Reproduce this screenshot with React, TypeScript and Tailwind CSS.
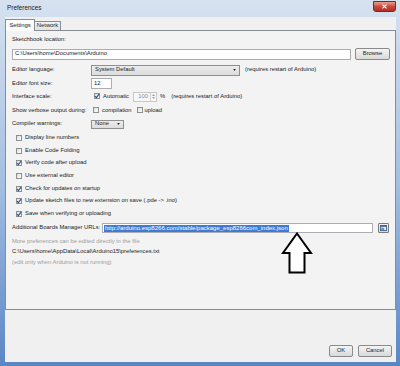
import React from 'react';

function Check({ on }: { on?: boolean }) {
    return (
        <span className="relative inline-flex h-[6px] w-[6px] shrink-0 items-center justify-center border border-[#8e8f8f] bg-gradient-to-br from-[#dcdcdc] to-white">
            {on && (
                <svg viewBox="0 0 8 8" className="absolute h-[6px] w-[6px]">
                    <path d="M1.3 4.2 L3.2 6.2 L6.8 1.4" stroke="#2f4f8f" strokeWidth="1.5" fill="none" />
                </svg>
            )}
        </span>
    );
}

function Btn({ label, w }: { label: string; w: string }) {
    return (
        <div className={`flex h-[12px] ${w} items-center justify-center rounded-[2px] border border-[#8a8a8a] bg-gradient-to-b from-[#f4f4f4] to-[#dadada] text-[#222]`}>
            {label}
        </div>
    );
}

function Row({ label, children }: { label: string; children: React.ReactNode }) {
    return (
        <div className="flex h-[13.5px] items-center">
            <span className="w-[79px] shrink-0 whitespace-nowrap">{label}</span>
            <div className="flex items-center">{children}</div>
        </div>
    );
}

function Option({ label, on }: { label: string; on?: boolean }) {
    return (
        <div className="flex h-[12.67px] items-center gap-[3px] pl-[4px] whitespace-nowrap">
            <Check on={on} />
            <span>{label}</span>
        </div>
    );
}

export default function App() {
    return (
        <div className="relative h-[366px] w-[400px] overflow-hidden bg-[#5f7fa8] font-['Liberation_Sans',Arial,sans-serif] text-[5.85px] leading-none text-[#1a1a1a]">
            <div className="flex h-full w-full flex-col bg-gradient-to-b from-[#d6e2f0] via-[#a4bfe2] to-[#5b86c4] pb-[4px] pl-[5px] pr-[4px]">
                {/* title bar */}
                <div className="flex h-[17px] shrink-0 items-start justify-between">
                    <span className="ml-[2px] mt-[5px] text-[6.4px] text-[#1a1a1a]">Preferences</span>
                    <div className="mt-[1px] flex h-[11px] w-[23px] items-center justify-center rounded-b-[3px] border border-[#6e2a2a] bg-gradient-to-b from-[#e8a093] via-[#c94a3c] to-[#b32d20]">
                        <svg viewBox="0 0 8 6" className="h-[5px] w-[7px]">
                            <path d="M1.5 0.8 L6.5 5.2 M6.5 0.8 L1.5 5.2" stroke="white" strokeWidth="1.4" />
                        </svg>
                    </div>
                </div>

                {/* client area */}
                <div className="flex flex-1 flex-col bg-[#f0f0f0]">
                    {/* tabs */}
                    <div className="flex h-[13px] items-end">
                        <div className="relative z-10 -mb-px flex h-[12px] w-[30px] items-center justify-center border border-b-0 border-[#898c95] bg-[#fbfbfb]">
                            Settings
                        </div>
                        <div className="flex h-[9px] w-[26px] items-center justify-center border border-b-0 border-l-0 border-[#898c95] bg-gradient-to-b from-[#f2f2f2] to-[#e3e3e3]">
                            Network
                        </div>
                    </div>

                    {/* panel */}
                    <div className="flex h-[280px] flex-col border border-[#898c95] bg-[#f3f3f3] pl-[6px] pr-[5px] pt-[4px]">
                        <div className="flex h-[10px] items-center">Sketchbook location:</div>
                        <div className="mt-[3px] flex items-center gap-[4px]">
                            <div className="flex h-[11px] w-[339px] items-center border border-[#abadb3] bg-white pl-[2px]">
                                C:\Users\home\Documents\Arduino
                            </div>
                            <Btn label="Browse" w="w-[35px]" />
                        </div>

                        <div className="mt-[3.5px]">
                            <Row label="Editor language:">
                                <div className="flex h-[11px] w-[149px] items-center justify-between border border-[#8f8f8f] bg-gradient-to-b from-[#ececec] to-[#dcdcdc] pl-[3px] pr-[3px]">
                                    <span>System Default</span>
                                    <svg viewBox="0 0 4 3" className="h-[2px] w-[3px]">
                                        <path d="M0 0 L4 0 L2 3 Z" fill="#222" />
                                    </svg>
                                </div>
                                <span className="ml-[5px] whitespace-nowrap">(requires restart of Arduino)</span>
                            </Row>
                            <Row label="Editor font size:">
                                <div className="flex h-[11px] w-[21px] items-center border border-[#abadb3] bg-white pl-[2px]">12</div>
                            </Row>
                            <Row label="Interface scale:">
                                <span className="ml-[3px]">
                                    <Check on />
                                </span>
                                <span className="ml-[3px]">Automatic</span>
                                <div className="ml-[4px] flex h-[10px] w-[24px] items-center justify-end border border-[#c8c8c8] bg-[#f7f7f7] text-[#8a8a8a]">
                                    <span className="mr-[2px]">100</span>
                                    <div className="flex h-full w-[6px] flex-col border-l border-[#cfcfcf]">
                                        <svg viewBox="0 0 4 3" className="mx-auto mt-[1px] h-[2px] w-[3px]">
                                            <path d="M0 3 L4 3 L2 0 Z" fill="#999" />
                                        </svg>
                                        <svg viewBox="0 0 4 3" className="mx-auto mt-[1px] h-[2px] w-[3px]">
                                            <path d="M0 0 L4 0 L2 3 Z" fill="#999" />
                                        </svg>
                                    </div>
                                </div>
                                <span className="ml-[3px]">%</span>
                                <span className="ml-[6px] whitespace-nowrap">(requires restart of Arduino)</span>
                            </Row>
                            <Row label="Show verbose output during:">
                                <span className="ml-[2px]">
                                    <Check />
                                </span>
                                <span className="ml-[3px]">compilation</span>
                                <span className="ml-[5px]">
                                    <Check />
                                </span>
                                <span className="ml-[2px]">upload</span>
                            </Row>
                            <Row label="Compiler warnings:">
                                <div className="flex h-[9px] w-[33px] items-center justify-between border border-[#8f8f8f] bg-gradient-to-b from-[#ececec] to-[#dcdcdc] pl-[3px] pr-[3px]">
                                    <span>None</span>
                                    <svg viewBox="0 0 4 3" className="h-[2px] w-[3px]">
                                        <path d="M0 0 L4 0 L2 3 Z" fill="#222" />
                                    </svg>
                                </div>
                            </Row>
                        </div>

                        <div className="mt-[0.7px] flex flex-col">
                            <Option label="Display line numbers" />
                            <Option label="Enable Code Folding" />
                            <Option label="Verify code after upload" on />
                            <Option label="Use external editor" />
                            <Option label="Check for updates on startup" on />
                            <Option label="Update sketch files to new extension on save (.pde -> .ino)" on />
                            <Option label="Save when verifying or uploading" on />
                        </div>

                        <div className="mt-[2px] flex h-[12px] items-center">
                            <span className="w-[90px] shrink-0 whitespace-nowrap">Additional Boards Manager URLs:</span>
                            <div className="flex h-[10px] w-[271px] items-center overflow-hidden border border-[#abadb3] bg-white pl-[1px]">
                                <span className="flex h-[7px] items-center bg-[#3d7bd6] px-[1px] whitespace-nowrap text-[6px] text-white">
                                    http://arduino.esp8266.com/stable/package_esp8266com_index.json
                                </span>
                            </div>
                            <div className="ml-[5px] flex h-[10px] w-[11px] items-center justify-center rounded-[1px] border border-[#7a7a7a] bg-gradient-to-b from-[#f4f4f4] to-[#d8d8d8]">
                                <svg viewBox="0 0 8 7" className="h-[6px] w-[7px]">
                                    <rect x="0.5" y="0.5" width="7" height="6" fill="#e8eef6" stroke="#3b5d8a" />
                                    <rect x="0.5" y="0.5" width="7" height="1.6" fill="#3b5d8a" />
                                    <rect x="1.2" y="3.2" width="3.6" height="2.6" fill="#6d8fbf" />
                                </svg>
                            </div>
                        </div>

                        <div className="mt-[2px] flex h-[10.5px] items-center text-[#9c9c9c]">More preferences can be edited directly in the file</div>
                        <div className="flex h-[10.5px] items-center">C:\Users\home\AppData\Local\Arduino15\preferences.txt</div>
                        <div className="flex h-[10.5px] items-center text-[#9c9c9c]">(edit only when Arduino is not running)</div>
                    </div>

                    {/* dialog buttons */}
                    <div className="flex flex-1 items-end justify-end gap-[5px] pb-[5px] pr-[4px]">
                        <Btn label="OK" w="w-[24px]" />
                        <Btn label="Cancel" w="w-[34px]" />
                    </div>
                </div>
            </div>

            {/* annotation arrow */}
            <svg viewBox="0 0 32 42" className="absolute left-[281px] top-[232px] h-[42px] w-[32px]">
                <path d="M16 1.5 L30 21 L23.5 21 L23.5 40.5 L8.5 40.5 L8.5 21 L2 21 Z" fill="white" stroke="black" strokeWidth="2" strokeLinejoin="miter" />
            </svg>
        </div>
    );
}
